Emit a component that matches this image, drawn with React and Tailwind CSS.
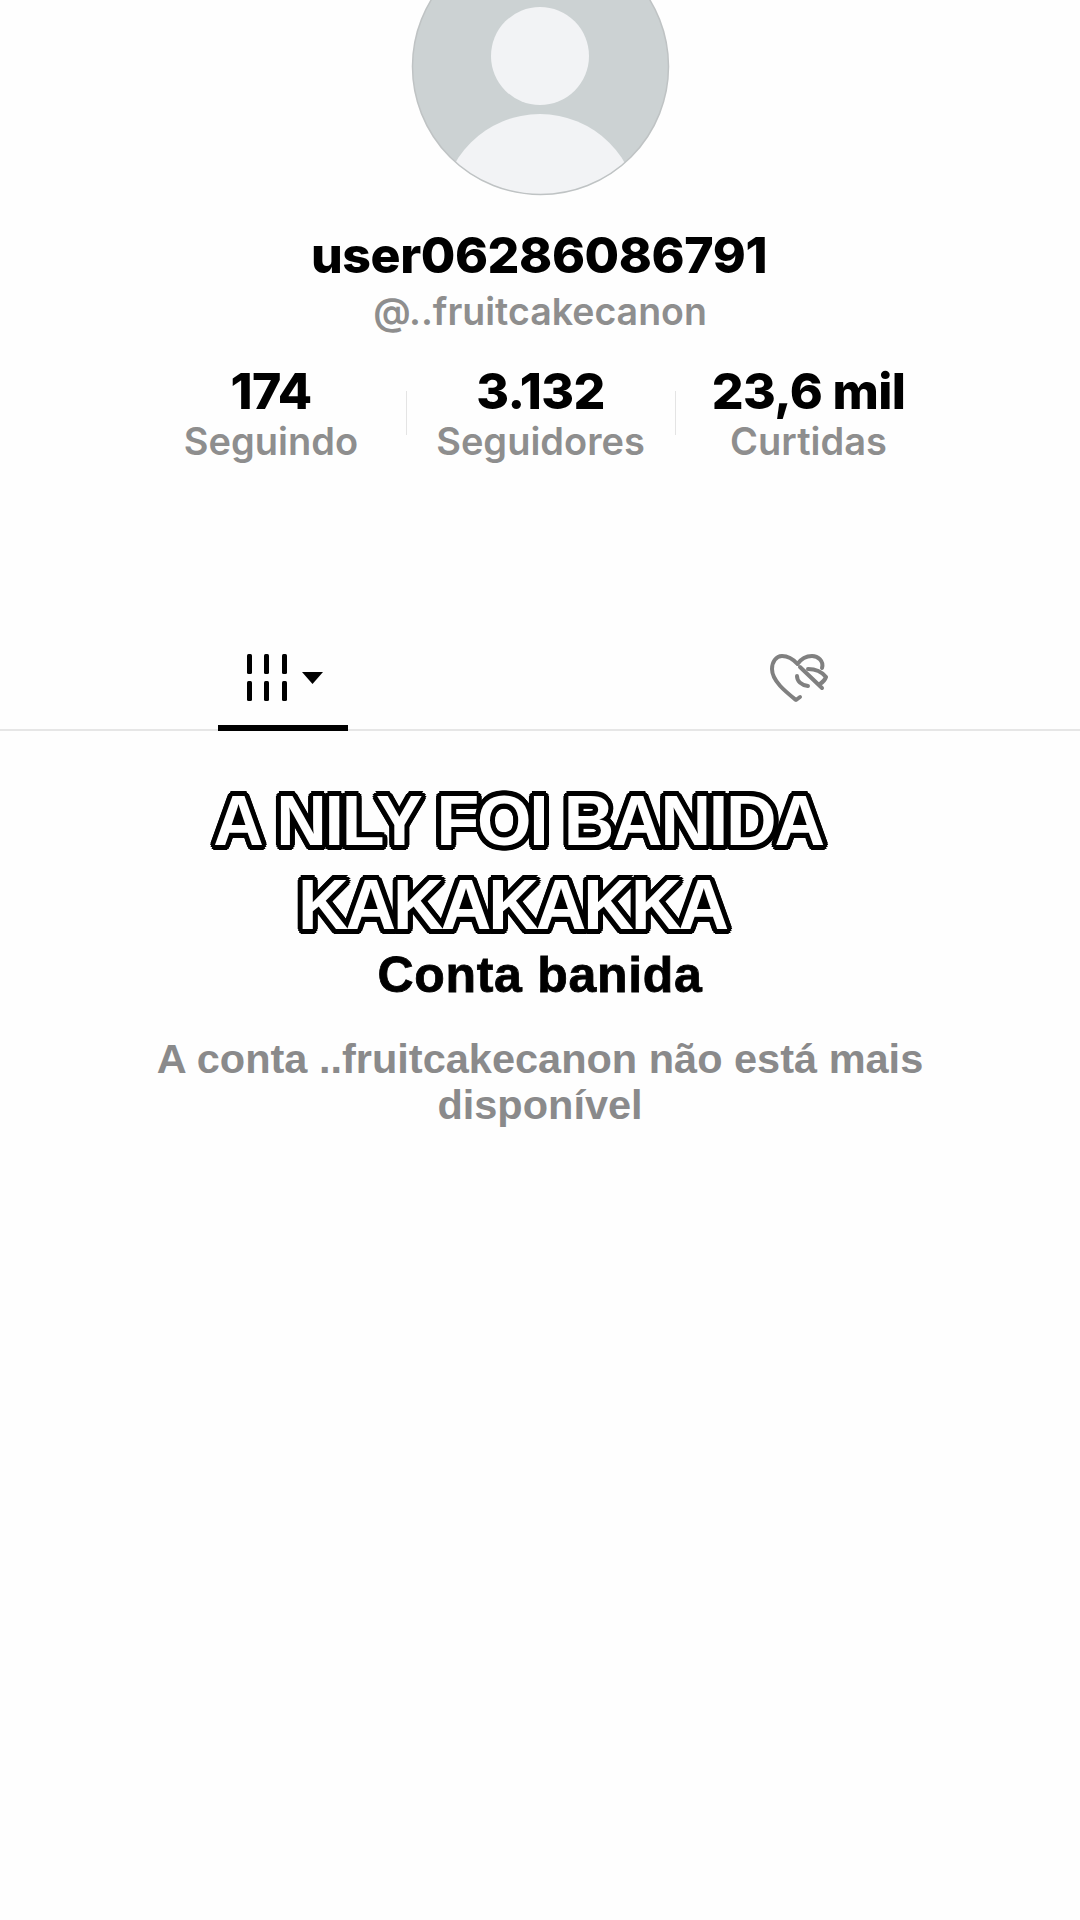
import React from "react";

const Avatar = () => (
  <svg width="259" height="259" viewBox="0 0 259 259" className="block">
    <defs>
      <clipPath id="avatar-clip">
        <circle cx="129.5" cy="129.5" r="128" />
      </clipPath>
    </defs>
    <circle cx="129.5" cy="129.5" r="128" fill="#ccd2d3" />
    <g clipPath="url(#avatar-clip)" fill="#f2f3f5">
      <circle cx="129" cy="119" r="49" />
      <circle cx="129" cy="275" r="98" />
    </g>
    <circle cx="129.5" cy="129.5" r="128" fill="none" stroke="#bfc3c4" strokeWidth="1.5" />
  </svg>
);

const GridIcon = () => (
  <svg width="78" height="48" viewBox="0 0 78 48" className="block">
    <g fill="#000">
      <rect x="0" y="0" width="5" height="20" rx="1.5" />
      <rect x="17" y="0" width="5" height="20" rx="1.5" />
      <rect x="35" y="0" width="5" height="20" rx="1.5" />
      <rect x="0" y="27" width="5" height="20" rx="1.5" />
      <rect x="17" y="27" width="5" height="20" rx="1.5" />
      <rect x="35" y="27" width="5" height="20" rx="1.5" />
      <path d="M55 18h21l-10.500 12z" />
    </g>
  </svg>
);

const HiddenHeart = () => (
  <svg width="58" height="50" viewBox="0 0 58 50" fill="none" stroke="#808080" strokeWidth="4" strokeLinecap="round" strokeLinejoin="round" className="block">
    <path d="M52 14C54 7 48 2 42 2C36 2 31 5 27.500 10C23 5 18 2 12 2C6 2 2 8 2 15C2 27 16 38 26 46L30 43" />
    <path d="M30 13L52 34" />
    <path d="M38 15C45 15 52 18 56 23C55 26 53 28 50 30" />
    <path d="M27 22C27 27 31 31 38 32" />
  </svg>
);

const Stat = ({ value, label, width }) => (
  <div className={`flex flex-col items-center ${width}`}>
    <p className="text-[50px] leading-[58px] font-extrabold tracking-[-0.6px] text-black">{value}</p>
    <p className="text-[38px] leading-[42px] font-semibold text-[#8e8e8e]">{label}</p>
  </div>
);

export default function App() {
  return (
    <div className="relative w-[1080px] h-[1920px] overflow-hidden bg-[#fefefe] font-['Inter',sans-serif]">
      <div className="flex flex-col items-center">
        <div className="mt-[-63px]">
          <Avatar />
        </div>
        <h1 className="mt-[29px] mr-[2px] text-[50px] leading-[60px] font-extrabold tracking-[-0.4px] text-black">user06286086791</h1>
        <p className="mt-[-2px] text-[37.500px] leading-[58px] font-semibold text-[#8e8e8e]">@..fruitcakecanon</p>
        <div className="mt-[21px] mr-[9px] flex items-center">
          <Stat value="174" label="Seguindo" width="w-[276px] pl-[7px]" />
          <div className="h-[44px] w-[1px] mt-[2px] bg-[#e4e4e4]" />
          <Stat value="3.132" label="Seguidores" width="w-[268px]" />
          <div className="h-[44px] w-[1px] mt-[2px] bg-[#e4e4e4]" />
          <Stat value="23,6 mil" label="Curtidas" width="w-[266px]" />
        </div>
      </div>

      <div className="mt-[192px] relative h-[77px] border-b-2 border-[#e6e6e6]">
        <div className="flex h-full">
          <div className="w-[540px] flex justify-center">
            <div className="w-[130px] h-[77px] ml-[26px] relative border-b-[6px] border-black pl-[29px]">
              <GridIcon />
            </div>
          </div>
          <div className="w-[540px] flex justify-center">
            <div className="mr-[22px]">
              <HiddenHeart />
            </div>
          </div>
        </div>
      </div>

      <div className="absolute left-0 top-[779px] w-[1036px] text-center font-['Liberation_Sans',sans-serif] font-bold text-[70px] leading-[84px] tracking-[-2.200px] text-white [text-shadow:5px_0_0_#000,4.600px_1.900px_0_#000,3.500px_3.500px_0_#000,1.900px_4.600px_0_#000,0_5px_0_#000,-1.900px_4.600px_0_#000,-3.500px_3.500px_0_#000,-4.600px_1.900px_0_#000,-5px_0_0_#000,-4.600px_-1.900px_0_#000,-3.500px_-3.500px_0_#000,-1.900px_-4.600px_0_#000,0_-5px_0_#000,1.900px_-4.600px_0_#000,3.500px_-3.500px_0_#000,4.600px_-1.900px_0_#000]">
        <p>A NILY FOI BANIDA</p>
        <p className="pr-[12px] tracking-[-3px]">KAKAKAKKA</p>
      </div>

      <div className="absolute left-0 right-0 top-[946px] flex flex-col items-center font-['Liberation_Sans',sans-serif] font-bold">
        <h2 className="text-[50px] leading-[58px] tracking-[0.7px] text-black [-webkit-text-stroke:0.8px_#000]">Conta banida</h2>
        <p className="mt-[32px] w-[820px] text-center text-[41.500px] leading-[46px] text-[#8a8a8b]">
          A conta ..fruitcakecanon não está mais disponível
        </p>
      </div>
    </div>
  );
}
